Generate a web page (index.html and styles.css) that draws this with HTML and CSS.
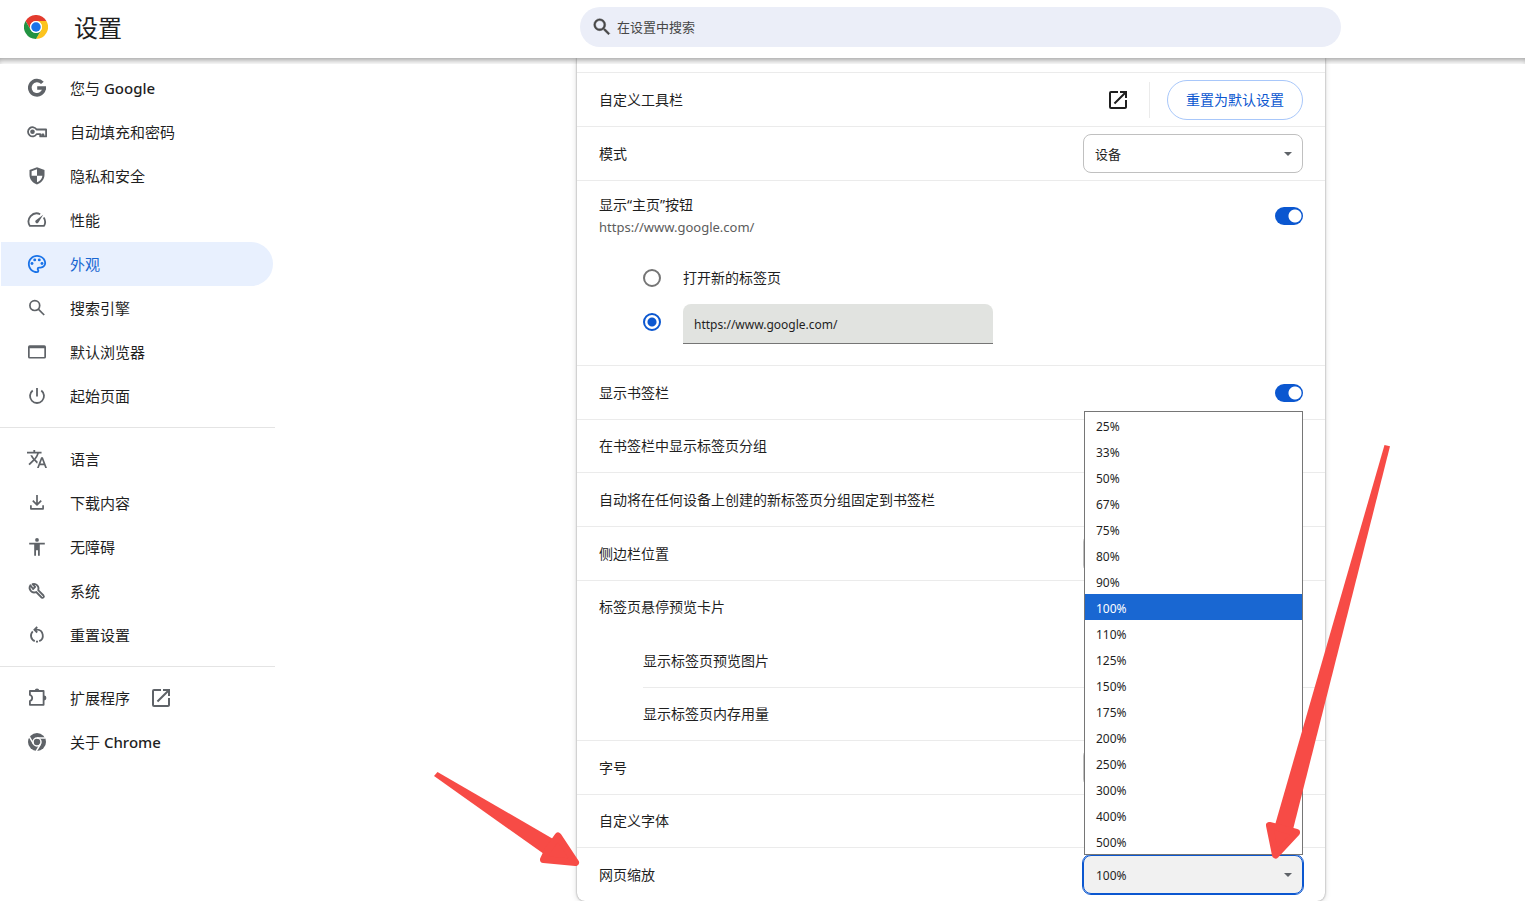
FILE: index.html
```html
<!DOCTYPE html>
<html lang="zh-CN">
<head>
<meta charset="utf-8">
<meta name="viewport" content="width=device-width, initial-scale=1">
<title>设置</title>
<link rel="stylesheet" href="styles.css">
</head>
<body>
<header class="toolbar">
  <div class="brand">
    <svg class="brand-logo" viewBox="0 0 48 48" aria-hidden="true">
      <circle cx="24" cy="24" r="24" fill="#fff"/>
      <path fill="#e33b2e" d="M3.2 12A24 24 0 0 1 44.8 12H24a12 12 0 0 0-10.4 18z"/>
      <path fill="#fcc31e" d="M44.8 12A24 24 0 0 1 24 48l10.4-18A12 12 0 0 0 24 12z"/>
      <path fill="#229342" d="M24 48A24 24 0 0 1 3.2 12l10.4 18a12 12 0 0 0 20.8 0z"/>
      <circle cx="24" cy="24" r="12" fill="#fff"/>
      <circle cx="24" cy="24" r="9.5" fill="#1a73e8"/>
    </svg>
    <h1 class="brand-title">设置</h1>
  </div>
  <label class="search">
    <svg class="search-icon" viewBox="0 0 24 24" aria-hidden="true"><path stroke="currentColor" stroke-width=".5" d="M15.5 14h-.79l-.28-.27A6.47 6.47 0 0 0 16 9.5 6.5 6.5 0 1 0 9.5 16c1.61 0 3.09-.59 4.23-1.57l.27.28v.79l5 4.99L20.49 19l-4.99-5zm-6 0a4.5 4.5 0 1 1 0-9 4.5 4.5 0 0 1 0 9z"/></svg>
    <input class="search-input" type="search" placeholder="在设置中搜索" aria-label="在设置中搜索">
  </label>
</header>

<div class="layout">
  <nav class="menu">
    <a class="menu-item" href="#people">
      <svg class="icon" viewBox="0 0 20 20" aria-hidden="true"><path fill="none" stroke="currentColor" stroke-width="3.600" d="M15.400 4.900A7.200 7.200 0 1 0 17.200 10M19 10H10.200"/></svg>
      <span>您与 <span class="latin">Google</span></span></a>
    <a class="menu-item" href="#autofill">
      <svg class="icon" viewBox="0 0 20 20" aria-hidden="true"><path fill="none" stroke="currentColor" stroke-width="1.800" stroke-linejoin="round" d="M9.600 7.500A4.600 4.600 0 1 0 9.600 12.100H13.200V14.400H15.200V12.300H16.400V14.400H19.100V7.500Z"/><circle cx="5.500" cy="9.800" r="2.300"/></svg>
      <span>自动填充和密码</span></a>
    <a class="menu-item" href="#privacy">
      <svg class="icon" viewBox="0 0 20 20" aria-hidden="true"><path fill-rule="evenodd" d="M10 1.300 2.500 4v5c0 4.200 3.200 7.900 7.500 9.500 4.300-1.600 7.500-5.300 7.500-9.500V4zM10 3.300v6.500h5.400c-.4 3-2.400 5.400-5.400 6.500V9.800H4.600V5.300z"/></svg>
      <span>隐私和安全</span></a>
    <a class="menu-item" href="#performance">
      <svg class="icon" viewBox="0 0 20 20" aria-hidden="true"><path fill="none" stroke="currentColor" stroke-width="1.800" stroke-linejoin="round" d="M13.200 4.200A8.100 8.100 0 0 0 2.900 15.900H17.100A8.100 8.100 0 0 0 16.700 7.500"/><path d="M16.200 4.700 11.400 12.600a1.700 1.700 0 0 1-2.800-2z"/></svg>
      <span>性能</span></a>
    <a class="menu-item menu-item--active" href="#appearance" aria-current="page">
      <svg class="icon" viewBox="1 1 22 22" aria-hidden="true"><path d="M12 22C6.490 22 2 17.510 2 12S6.490 2 12 2s10 4.040 10 9c0 3.310-2.690 6-6 6h-1.770c-.28 0-.5.220-.5.500 0 .12.050.23.130.33.410.47.640 1.060.640 1.670A2.500 2.500 0 0 1 12 22zm0-18c-4.410 0-8 3.590-8 8s3.590 8 8 8c.28 0 .5-.22.500-.5a.54.540 0 0 0-.14-.35c-.41-.46-.63-1.050-.63-1.650a2.500 2.500 0 0 1 2.500-2.500H16c2.210 0 4-1.790 4-4 0-3.860-3.590-7-8-7z"/><circle cx="6.500" cy="11.500" r="1.600"/><circle cx="9.500" cy="7.500" r="1.600"/><circle cx="14.500" cy="7.500" r="1.600"/><circle cx="17.500" cy="11.500" r="1.600"/></svg>
      <span>外观</span></a>
    <a class="menu-item" href="#search">
      <svg class="icon" viewBox="0 0 20 20" aria-hidden="true"><g fill="none" stroke="currentColor" stroke-width="1.700"><circle cx="7.800" cy="7.600" r="4.900"/><path d="M11.300 11.100 17.200 17"/></g></svg>
      <span>搜索引擎</span></a>
    <a class="menu-item" href="#default-browser">
      <svg class="icon" viewBox="0 0 20 20" aria-hidden="true"><path fill-rule="evenodd" d="M2.700 3.200h14.600A1.700 1.700 0 0 1 19 4.900v10a1.700 1.700 0 0 1-1.700 1.700H2.700A1.700 1.700 0 0 1 1 14.900v-10a1.700 1.700 0 0 1 1.700-1.700zM2.700 6.300v8.600h14.600V6.300z"/></svg>
      <span>默认浏览器</span></a>
    <a class="menu-item" href="#on-startup">
      <svg class="icon" viewBox="0 0 20 20" aria-hidden="true"><path fill="none" stroke="currentColor" stroke-width="1.800" d="M10 2V10.500M5.700 4.500A7 7 0 1 0 14.300 4.500"/></svg>
      <span>起始页面</span></a>
    <hr class="menu-divider">
    <a class="menu-item" href="#languages">
      <svg class="icon" viewBox="1 1 22 22" aria-hidden="true"><path d="m12.870 15.070-2.540-2.510.03-.03A17.520 17.520 0 0 0 14.070 6H17V4h-7V2H8v2H1v1.990h11.170C11.500 7.920 10.440 9.750 9 11.350 8.070 10.320 7.300 9.190 6.690 8h-2c.73 1.630 1.730 3.170 2.980 4.560l-5.090 5.020L4 19l5-5 3.110 3.110.76-2.040zM18.500 10h-2L12 22h2l1.120-3h4.750L21 22h2l-4.500-12zm-2.620 7 1.620-4.330L19.120 17h-3.240z"/></svg>
      <span>语言</span></a>
    <a class="menu-item" href="#downloads">
      <svg class="icon" viewBox="0 0 20 20" aria-hidden="true"><path fill="none" stroke="currentColor" stroke-width="1.700" stroke-linejoin="round" d="M10 2V12M5.800 7.600 10 11.800 14.200 7.600M3.900 12.300V15.800H16.100V12.300"/></svg>
      <span>下载内容</span></a>
    <a class="menu-item" href="#accessibility">
      <svg class="icon" viewBox="0 0 20 20" aria-hidden="true"><circle cx="10" cy="2.900" r="1.900"/><path d="M2.200 5.800H17.800V7.500H12.800V18.700H11V13.200H9V18.700H7.200V7.500H2.200z"/></svg>
      <span>无障碍</span></a>
    <a class="menu-item" href="#system">
      <svg class="icon" viewBox="0 0 20 20" aria-hidden="true"><path fill="none" stroke="currentColor" stroke-width="1.800" stroke-linejoin="round" d="M3.400 4.300A4.600 4.600 0 0 0 9.200 11L14.600 16.500Q15.600 17.200 16.500 16.400T16.500 14.500L11.200 9.200A4.600 4.600 0 0 0 5.500 3.200L8.200 5.900 6.100 8z"/></svg>
      <span>系统</span></a>
    <a class="menu-item" href="#reset">
      <svg class="icon" viewBox="0 0 20 20" aria-hidden="true"><path fill="none" stroke="currentColor" stroke-width="1.800" d="M7.400 4.700H10A6 6 0 0 1 12.200 16.200M11 16.700H9M7.800 16.200A6 6 0 0 1 5.800 6.300M10.200 1.800 7.400 4.700 10.200 7.500"/></svg>
      <span>重置设置</span></a>
    <hr class="menu-divider">
    <a class="menu-item" href="#extensions">
      <svg class="icon" viewBox="0 0 20 20" aria-hidden="true"><path fill="none" stroke="currentColor" stroke-width="1.800" stroke-linejoin="round" d="M2.900 3H16.600V16.800H2.900V13Q5.200 12.200 5.200 10T2.900 7Z"/><path d="M7.800 2.600a2.200 2.200 0 0 1 4.400 0zM17 7.600a2.400 2.400 0 0 1 0 4.800z"/></svg>
      <span>扩展程序</span>
      <svg class="icon" viewBox="2 2 20 20" aria-hidden="true"><path d="M19 19H5V5h7V3H5a2 2 0 0 0-2 2v14a2 2 0 0 0 2 2h14c1.100 0 2-.9 2-2v-7h-2v7zM14 3v2h3.590l-9.830 9.830 1.410 1.410L19 6.410V10h2V3h-7z"/></svg></a>
    <a class="menu-item" href="#about">
      <svg class="icon" viewBox="0 0 20 20" aria-hidden="true"><circle cx="10" cy="10" r="9"/><g fill="none" stroke="#fff" stroke-width="1.500"><circle cx="10" cy="10" r="4"/><path d="M10 6H18.200M13.460 12 9.300 19.200M6.540 12 2.400 4.800"/></g></svg>
      <span>关于 <span class="latin">Chrome</span></span></a>
  </nav>

  <main class="card">
    <div class="card-lead"></div>
    <section class="row">
      <h2 class="row-label">自定义工具栏</h2>
      <button class="icon-button" type="button" aria-label="自定义工具栏">
        <svg class="icon" viewBox="2 2 20 20" aria-hidden="true"><path d="M19 19H5V5h7V3H5a2 2 0 0 0-2 2v14a2 2 0 0 0 2 2h14c1.100 0 2-.9 2-2v-7h-2v7zM14 3v2h3.590l-9.830 9.830 1.410 1.410L19 6.410V10h2V3h-7z"/></svg>
      </button>
      <span class="separator"></span>
      <button class="reset-button" type="button">重置为默认设置</button>
    </section>
    <section class="row">
      <label class="row-label" for="mode">模式</label>
      <div class="select"><select class="select-box" id="mode"><option>设备</option></select></div>
    </section>
    <section class="row row--tall">
      <label class="row-label" for="home">显示“主页”按钮<span class="row-note">https://www.google.com/</span></label>
      <input class="toggle" id="home" type="checkbox" checked>
    </section>
    <div class="home-options">
      <label class="option"><input class="radio" type="radio" name="home-page"><span>打开新的标签页</span></label>
      <div class="option">
        <input class="radio" type="radio" name="home-page" aria-label="https://www.google.com/" checked>
        <input class="url-input" type="text" value="https://www.google.com/" aria-label="网址">
      </div>
    </div>
    <section class="row">
      <label class="row-label" for="bookmarks">显示书签栏</label>
      <input class="toggle" id="bookmarks" type="checkbox" checked>
    </section>
    <section class="row row--compact"><h2 class="row-label">在书签栏中显示标签页分组</h2></section>
    <section class="row"><h2 class="row-label">自动将在任何设备上创建的新标签页分组固定到书签栏</h2></section>
    <section class="row">
      <label class="row-label" for="side-panel">侧边栏位置</label>
      <div class="select"><select class="select-box" id="side-panel"></select></div>
    </section>
    <section class="row row--compact"><h2 class="row-label">标签页悬停预览卡片</h2></section>
    <div class="sub-rows">
      <section class="row row--sub"><h3 class="row-label">显示标签页预览图片</h3></section>
      <section class="row row--sub row--compact"><h3 class="row-label">显示标签页内存用量</h3></section>
    </div>
    <section class="row">
      <label class="row-label" for="font-size">字号</label>
      <div class="select"><select class="select-box" id="font-size"></select></div>
    </section>
    <section class="row row--compact"><h2 class="row-label">自定义字体</h2></section>
    <section class="row">
      <label class="row-label" for="zoom">网页缩放</label>
      <div class="select select--open">
        <select class="select-box" id="zoom"><option>100%</option></select>
        <ul class="popup" role="listbox" aria-label="网页缩放">
          <li class="popup-item" role="option">25%</li>
          <li class="popup-item" role="option">33%</li>
          <li class="popup-item" role="option">50%</li>
          <li class="popup-item" role="option">67%</li>
          <li class="popup-item" role="option">75%</li>
          <li class="popup-item" role="option">80%</li>
          <li class="popup-item" role="option">90%</li>
          <li class="popup-item popup-item--selected" role="option" aria-selected="true">100%</li>
          <li class="popup-item" role="option">110%</li>
          <li class="popup-item" role="option">125%</li>
          <li class="popup-item" role="option">150%</li>
          <li class="popup-item" role="option">175%</li>
          <li class="popup-item" role="option">200%</li>
          <li class="popup-item" role="option">250%</li>
          <li class="popup-item" role="option">300%</li>
          <li class="popup-item" role="option">400%</li>
          <li class="popup-item" role="option">500%</li>
        </ul>
      </div>
    </section>
    <svg class="pointer pointer--label" viewBox="0 0 150 100" aria-hidden="true"><path d="M4 6 7.500 2 124 69.500 114 84z"/><path class="pointer-head" d="M128 66 145.500 92.500 113.500 89.500 118 80z"/></svg>
    <svg class="pointer pointer--select" viewBox="0 0 130 420" aria-hidden="true"><path d="M124.500 5 130 6.300 33 389.500 15 385z"/><path class="pointer-head" d="M9.500 385.500 36.500 392.500 15.500 415z"/></svg>
  </main>
</div>
</body>
</html>
```
FILE: styles.css
```css
* {
  box-sizing: border-box;
}

body {
  margin: 0;
  background: #fff;
  color: #1f1f1f;
  font-family: "Noto Sans", "Noto Sans CJK SC", sans-serif;
  font-size: 14px;
  line-height: 22px;
}

h1, h2, h3, ul {
  margin: 0;
  padding: 0;
  font-weight: 400;
}

button, input, select {
  margin: 0;
  font-family: inherit;
  color: inherit;
}

/* Top bar */
.toolbar {
  position: sticky;
  top: 0;
  z-index: 2;
  display: grid;
  grid-template-columns: 275px 305fr minmax(0, 761px) 184fr;
  align-items: center;
  height: 58px;
  padding-bottom: 4px;
  background: #fff;
}

.toolbar::after {
  content: "";
  position: absolute;
  top: 100%;
  left: 0;
  right: 0;
  height: 6px;
  box-shadow: inset 0 5px 6px -3px rgba(0, 0, 0, .4);
}

.brand {
  display: flex;
  align-items: center;
  gap: 26px;
  padding-left: 24px;
}

.brand-logo {
  width: 24px;
  height: 24px;
}

.brand-title {
  padding-top: 2px;
  font-size: 24px;
  line-height: 32px;
}

.search {
  grid-column: 3;
  display: flex;
  align-items: center;
  gap: 4px;
  height: 40px;
  padding: 0 11px;
  border-radius: 20px;
  background: #ebeef8;
  color: #474747;
}

.search-icon {
  flex: none;
  width: 22px;
  height: 22px;
  fill: currentColor;
}

.search-input {
  flex: 1;
  min-width: 0;
  padding: 0;
  border: 0;
  outline: 0;
  background: none;
  font-size: 13px;
}

.search-input::placeholder {
  color: #474747;
}

/* Page columns */
.layout {
  display: grid;
  grid-template-columns: 275px 302fr minmax(0, 748px) 200fr;
  align-items: start;
}

.icon {
  flex: none;
  width: 20px;
  height: 20px;
  fill: currentColor;
}

/* Side menu */
.menu {
  padding-top: 8px;
}

.menu-item {
  display: flex;
  align-items: center;
  gap: 23px;
  height: 44px;
  margin: 0 2px 0 1px;
  padding-left: 26px;
  border-radius: 0 22px 22px 0;
  color: #1f1f1f;
  font-size: 15px;
  text-decoration: none;
}

.menu-item > .icon {
  color: #5f6368;
}

.menu-item > .icon:last-child {
  margin-left: -2px;
}

.menu-item--active {
  background: #e8f0fe;
  color: #1967d2;
}

.menu-item--active > .icon {
  color: #1a73e8;
}

.latin {
  font-weight: 500;
}

.menu-divider {
  height: 1px;
  margin: 9px 0;
  border: 0;
  background: #e4e4e4;
}

/* Settings card */
.card {
  position: relative;
  grid-column: 3;
  border-radius: 0 0 8px 8px;
  background: #fff;
  box-shadow: 0 0 2px rgba(0, 0, 0, .45), 0 1px 6px rgba(0, 0, 0, .15);
}

.card-lead {
  height: 14px;
}

.row {
  display: flex;
  align-items: center;
  min-height: 54px;
  padding: 0 22px;
  border-top: 1px solid #ebebeb;
}

.row--compact {
  min-height: 53px;
}

.row--tall {
  min-height: 70px;
}

.row-label {
  flex: 1;
  font-size: 14px;
  line-height: 22px;
}

.row-note {
  display: block;
  font-size: 13px;
  color: #5c5c5c;
}

.sub-rows {
  padding-left: 66px;
}

.row--sub {
  padding-left: 0;
}

.row--sub:first-child {
  border-top-color: transparent;
}

.icon-button {
  display: flex;
  padding: 0;
  border: 0;
  background: none;
}

.separator {
  width: 1px;
  height: 36px;
  margin: 0 17px 0 21px;
  background: #ebebeb;
}

.reset-button {
  height: 40px;
  padding: 0 18px 2px;
  border: 1px solid #a8c7fa;
  border-radius: 20px;
  background: #fff;
  color: #0b57d0;
  font-size: 14px;
}

/* Form controls */
.select {
  position: relative;
  width: 220px;
}

.select::after {
  content: "";
  position: absolute;
  top: 18px;
  right: 11px;
  border: 4px solid transparent;
  border-top-color: #5f6368;
  border-bottom: 0;
  pointer-events: none;
}

.select-box {
  display: block;
  width: 100%;
  height: 39px;
  padding: 1px 12px 0 11px;
  border: 1px solid #c0c0c0;
  border-radius: 8px;
  background: #fff;
  font-size: 13px;
  appearance: none;
}

.select--open .select-box {
  padding: 2px 12px 0;
  border-color: #0b57d0;
  outline: 1px solid #0b57d0;
  background: #f1f1f1;
  font-size: 12px;
}

.popup {
  position: absolute;
  z-index: 1;
  bottom: 100%;
  left: 1px;
  right: 0;
  border: 1px solid #767676;
  background: #fff;
  list-style: none;
}

.popup-item {
  height: 26px;
  padding: 2px 11px 0;
  font-size: 12px;
  line-height: 26px;
}

.popup-item--selected {
  background: #1967d2;
  color: #fff;
}

.toggle {
  width: 28px;
  height: 18px;
  border-radius: 9px;
  background: radial-gradient(circle at 20px 9px, #fff 6px, #0b57d0 7px);
  appearance: none;
}

.home-options {
  padding: 6px 22px 21px 66px;
}

.option {
  display: flex;
  align-items: center;
  gap: 22px;
  height: 44px;
}

.radio {
  width: 18px;
  height: 18px;
  border: 2px solid #757575;
  border-radius: 50%;
  appearance: none;
}

.radio:checked {
  border-color: #0b57d0;
  background: radial-gradient(circle, #0b57d0 4px, #fff 5px);
}

.url-input {
  align-self: flex-end;
  width: 310px;
  height: 40px;
  padding: 2px 11px 0;
  border: 0;
  border-bottom: 1px solid #757575;
  border-radius: 8px 8px 0 0;
  background: #e1e3e0;
  font-size: 12px;
}

/* Red pointers drawn over the card */
.pointer {
  position: absolute;
  z-index: 1;
  fill: #f74b46;
  pointer-events: none;
}

.pointer-head {
  stroke: #f74b46;
  stroke-width: 7px;
  stroke-linejoin: round;
}

.pointer--label {
  bottom: 31px;
  left: -147px;
  width: 150px;
  height: 100px;
}

.pointer--select {
  bottom: 41px;
  right: -65px;
  width: 130px;
  height: 420px;
}
```
